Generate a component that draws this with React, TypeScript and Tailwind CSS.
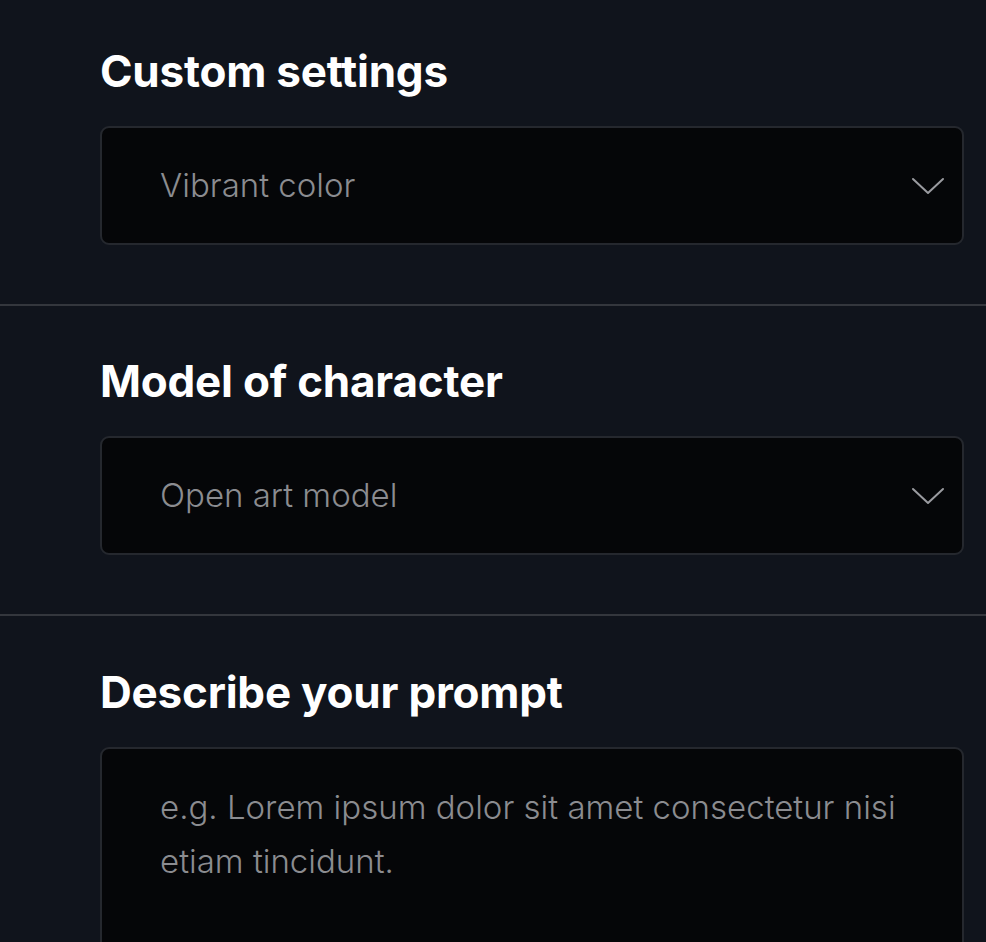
const heading = "text-[44px] leading-[52px] font-bold tracking-[-0.005em] text-white"

function Chevron() {
  return (
    <svg width="34" height="20" viewBox="0 0 34 20" fill="none" className="text-[#9a9ba0]">
      <polyline points="2,3 17,17 32,3" stroke="currentColor" strokeWidth="2" strokeLinecap="round" strokeLinejoin="round" />
    </svg>
  )
}

function SelectBox({ value }: { value: string }) {
  return (
    <div className="mt-[29px] flex h-[119px] items-center justify-between rounded-[9px] border-2 border-[#25282e] bg-[#050608] pl-[58px] pr-[17px]">
      <span className="text-[33px] font-light text-[#8b8c90]">{value}</span>
      <Chevron />
    </div>
  )
}

export default function App() {
  return (
    <div
      className="min-h-screen overflow-hidden bg-[#10141c]"
      style={{ fontFamily: "Inter, 'Noto Sans', sans-serif" }}
    >
      <section className="border-b-2 border-[#34373d] pl-[100px] pr-[22px] pt-[45px] pb-[59px]">
        <h2 className={heading}>Custom settings</h2>
        <SelectBox value="Vibrant color" />
      </section>

      <section className="border-b-2 border-[#34373d] pl-[100px] pr-[22px] pt-[49px] pb-[59px]">
        <h2 className={heading}>Model of character</h2>
        <SelectBox value="Open art model" />
      </section>

      <section className="pl-[100px] pr-[22px] pt-[50px]">
        <h2 className={heading}>Describe your prompt</h2>
        <div className="mt-[29px] h-[260px] rounded-[9px] border-2 border-[#25282e] bg-[#050608] pl-[58px] pr-[40px] pt-[31px]">
          <p className="text-[33px] font-light leading-[54px] text-[#8b8c90]">
            e.g. Lorem ipsum dolor sit amet consectetur nisi etiam tincidunt.
          </p>
        </div>
      </section>
    </div>
  )
}
